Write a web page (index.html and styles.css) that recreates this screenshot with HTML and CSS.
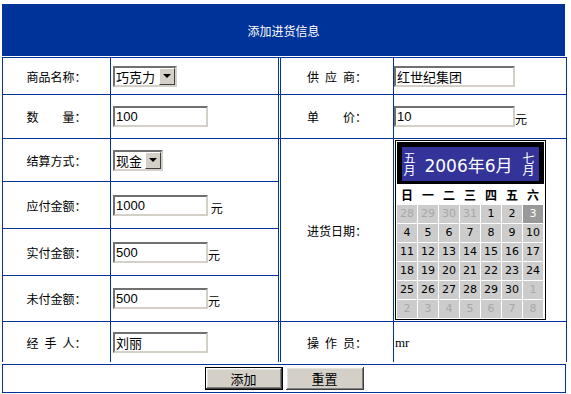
FILE: index.html
```html
<!DOCTYPE html>
<html>

<head>
	<title>添加进货信息</title>
	<meta charset="UTF-8" />

	<link rel="stylesheet" href="styles.css">
</head>

<body>

<div class="page">
	<div class="banner">添加进货信息</div>

	<table class="form">
		<colgroup>
			<col class="c-label" />
			<col class="c-field" />
			<col class="c-label2" />
			<col class="c-field2" />
		</colgroup>
		<tr class="r1">
			<td class="label">商品名称：</td>
			<td class="field">
				<span class="combo"><select class="pick goods"><option>巧克力</option></select><span class="drop"></span></span>
			</td>
			<td class="label mid">供&ensp;应&ensp;商：</td>
			<td class="field right"><input class="text wide" type="text" value="红世纪集团" /></td>
		</tr>
		<tr class="r2">
			<td class="label">数　　量：</td>
			<td class="field"><input class="text" type="text" value="100" /></td>
			<td class="label mid">单　　价：</td>
			<td class="field right"><input class="text wide" type="text" value="10" /><span class="unit">元</span></td>
		</tr>
		<tr class="r3">
			<td class="label">结算方式：</td>
			<td class="field">
				<span class="combo"><select class="pick pay"><option>现金</option></select><span class="drop"></span></span>
			</td>
			<td class="label mid" rowspan="4">进货日期：</td>
			<td class="field right cal-cell" rowspan="4">
				<div class="cal">
					<div class="cal-head">
						<div class="cal-bar">
							<span class="cal-nav">五月</span>
							<span class="cal-title">2006年6月</span>
							<span class="cal-nav">七月</span>
						</div>
					</div>
					<div class="cal-week">
						<span>日</span><span>一</span><span>二</span><span>三</span><span>四</span><span>五</span><span>六</span>
					</div>
					<div class="cal-days">
						<span class="off">28</span><span class="off">29</span><span class="off">30</span><span class="off">31</span><span>1</span><span>2</span><span class="today">3</span>
						<span>4</span><span>5</span><span>6</span><span>7</span><span>8</span><span>9</span><span>10</span>
						<span>11</span><span>12</span><span>13</span><span>14</span><span>15</span><span>16</span><span>17</span>
						<span>18</span><span>19</span><span>20</span><span>21</span><span>22</span><span>23</span><span>24</span>
						<span>25</span><span>26</span><span>27</span><span>28</span><span>29</span><span>30</span><span class="off">1</span>
						<span class="off">2</span><span class="off">3</span><span class="off">4</span><span class="off">5</span><span class="off">6</span><span class="off">7</span><span class="off">8</span>
					</div>
				</div>
			</td>
		</tr>
		<tr class="r4">
			<td class="label">应付金额：</td>
			<td class="field"><input class="text" type="text" value="1000" /> <span class="unit">元</span></td>
		</tr>
		<tr class="r5">
			<td class="label">实付金额：</td>
			<td class="field"><input class="text" type="text" value="500" /><span class="unit">元</span></td>
		</tr>
		<tr class="r6">
			<td class="label">未付金额：</td>
			<td class="field"><input class="text" type="text" value="500" /><span class="unit">元</span></td>
		</tr>
		<tr class="r7">
			<td class="label">经&ensp;手&ensp;人：</td>
			<td class="field"><input class="text" type="text" value="刘丽" /></td>
			<td class="label mid">操&ensp;作&ensp;员：</td>
			<td class="field right"><span class="operator">mr</span></td>
		</tr>
	</table>

	<div class="actions">
		<button class="btn default" type="submit">添加</button>
		<button class="btn" type="reset">重置</button>
	</div>
</div>

</body>

</html>
```

FILE: styles.css
```css
* {
  box-sizing: border-box;
}

body {
  margin: 0;
  font: 12px "Noto Sans CJK SC", sans-serif;
  color: #000;
  background: #fff;
}

.page {
  width: 564px;
  margin: 4px 0 0 2px;
}

.banner {
  display: flex;
  align-items: center;
  justify-content: center;
  width: 563px;
  height: 52px;
  margin-bottom: 1px;
  background: #003399;
  color: #fff;
}

.form {
  width: 564px;
  table-layout: fixed;
  border-collapse: separate;
  border-spacing: 0;
  border-right: 1px solid #003399;
}

.c-label { width: 108px; }
.c-field { width: 168px; }
.c-label2 { width: 115px; }
.c-field2 { width: 173px; }

.form td {
  padding: 0;
  border-top: 1px solid #003399;
  border-left: 1px solid #003399;
  vertical-align: middle;
}

.form td.mid {
  border-left: 3px double #003399;
}

.r1 td { height: 37px; }
.r2 td { height: 44px; }
.r3 td { height: 43px; }
.r4 td { height: 47px; }
.r5 td { height: 47px; }
.r6 td { height: 46px; }
.r7 td { height: 41px; }

.label {
  text-align: center;
}

.field {
  padding-left: 2px !important;
  white-space: nowrap;
}

.field.right {
  padding-left: 0 !important;
}

.text {
  width: 95px;
  height: 21px;
  padding: 0 1px;
  border: 2px solid;
  border-color: #707070 #d4d0c8 #d4d0c8 #707070;
  font: 13px "Liberation Sans", "Noto Sans CJK SC", sans-serif;
  vertical-align: bottom;
  outline: none;
}

.text.wide {
  width: 121px;
}

.unit {
  font-size: 12px;
}

.combo {
  display: inline-flex;
  height: 21px;
  border: 2px solid;
  border-color: #707070 #d4d0c8 #d4d0c8 #707070;
  background: #fff;
  vertical-align: middle;
}

.pick {
  appearance: none;
  height: 17px;
  padding: 0 1px;
  border: 0;
  background: #fff;
  font: 13px "Noto Sans CJK SC", sans-serif;
  line-height: 17px;
  outline: none;
}

.pick.goods { width: 44px; }
.pick.pay { width: 30px; }

.drop {
  display: flex;
  align-items: center;
  justify-content: center;
  width: 16px;
  height: 17px;
  background: #d4d0c8;
  border: 1px solid;
  border-color: #ffffff #404040 #404040 #ffffff;
}

.drop::after {
  content: "";
  border-left: 4px solid transparent;
  border-right: 4px solid transparent;
  border-top: 4px solid #000;
}

.operator {
  padding-left: 1px;
  font: 13px "Liberation Serif", serif;
}

/* calendar */
.cal {
  width: 151px;
  margin-left: 1px;
  padding: 1px;
  border: 1px solid #000;
  background: #fff;
}

.cal-head {
  height: 42px;
  padding: 5px 5px 3px;
  background: #000;
}

.cal-bar {
  display: flex;
  align-items: center;
  justify-content: space-between;
  height: 34px;
  padding: 0 5px 0 1px;
  background: #333399;
  color: #fff;
}

.cal-nav {
  writing-mode: vertical-rl;
  font-size: 12px;
  line-height: 12px;
}

.cal-title {
  font: 17px "DejaVu Sans", "Noto Sans CJK SC", sans-serif;
}

.cal-week,
.cal-days {
  display: grid;
  grid-template-columns: repeat(7, 20px);
  column-gap: 1px;
}

.cal-week {
  height: 20px;
  margin-bottom: 1px;
  align-items: center;
  text-align: center;
  font-weight: bold;
}

.cal-days {
  grid-auto-rows: 18px;
  row-gap: 1px;
}

.cal-days span {
  background: #cccccc;
  text-align: center;
  font: 11px/18px "DejaVu Sans", sans-serif;
}

.cal-days .off {
  color: #a8a8a8;
}

.cal-days .today {
  background: #999999;
  color: #fff;
}

/* buttons */
.actions {
  display: flex;
  align-items: center;
  justify-content: center;
  gap: 3px;
  width: 564px;
  height: 29px;
  margin-top: 2px;
  border: 1px solid #003399;
}

.btn {
  width: 78px;
  height: 23px;
  padding: 0;
  border: 0;
  background: #d4d0c8;
  font: 13px "Noto Sans CJK SC", sans-serif;
  box-shadow: inset -1px -1px #404040, inset 1px 1px #ffffff, inset -2px -2px #808080, inset 2px 2px #e4e2dc;
}

.btn.default {
  border: 1px solid #000;
}
```
